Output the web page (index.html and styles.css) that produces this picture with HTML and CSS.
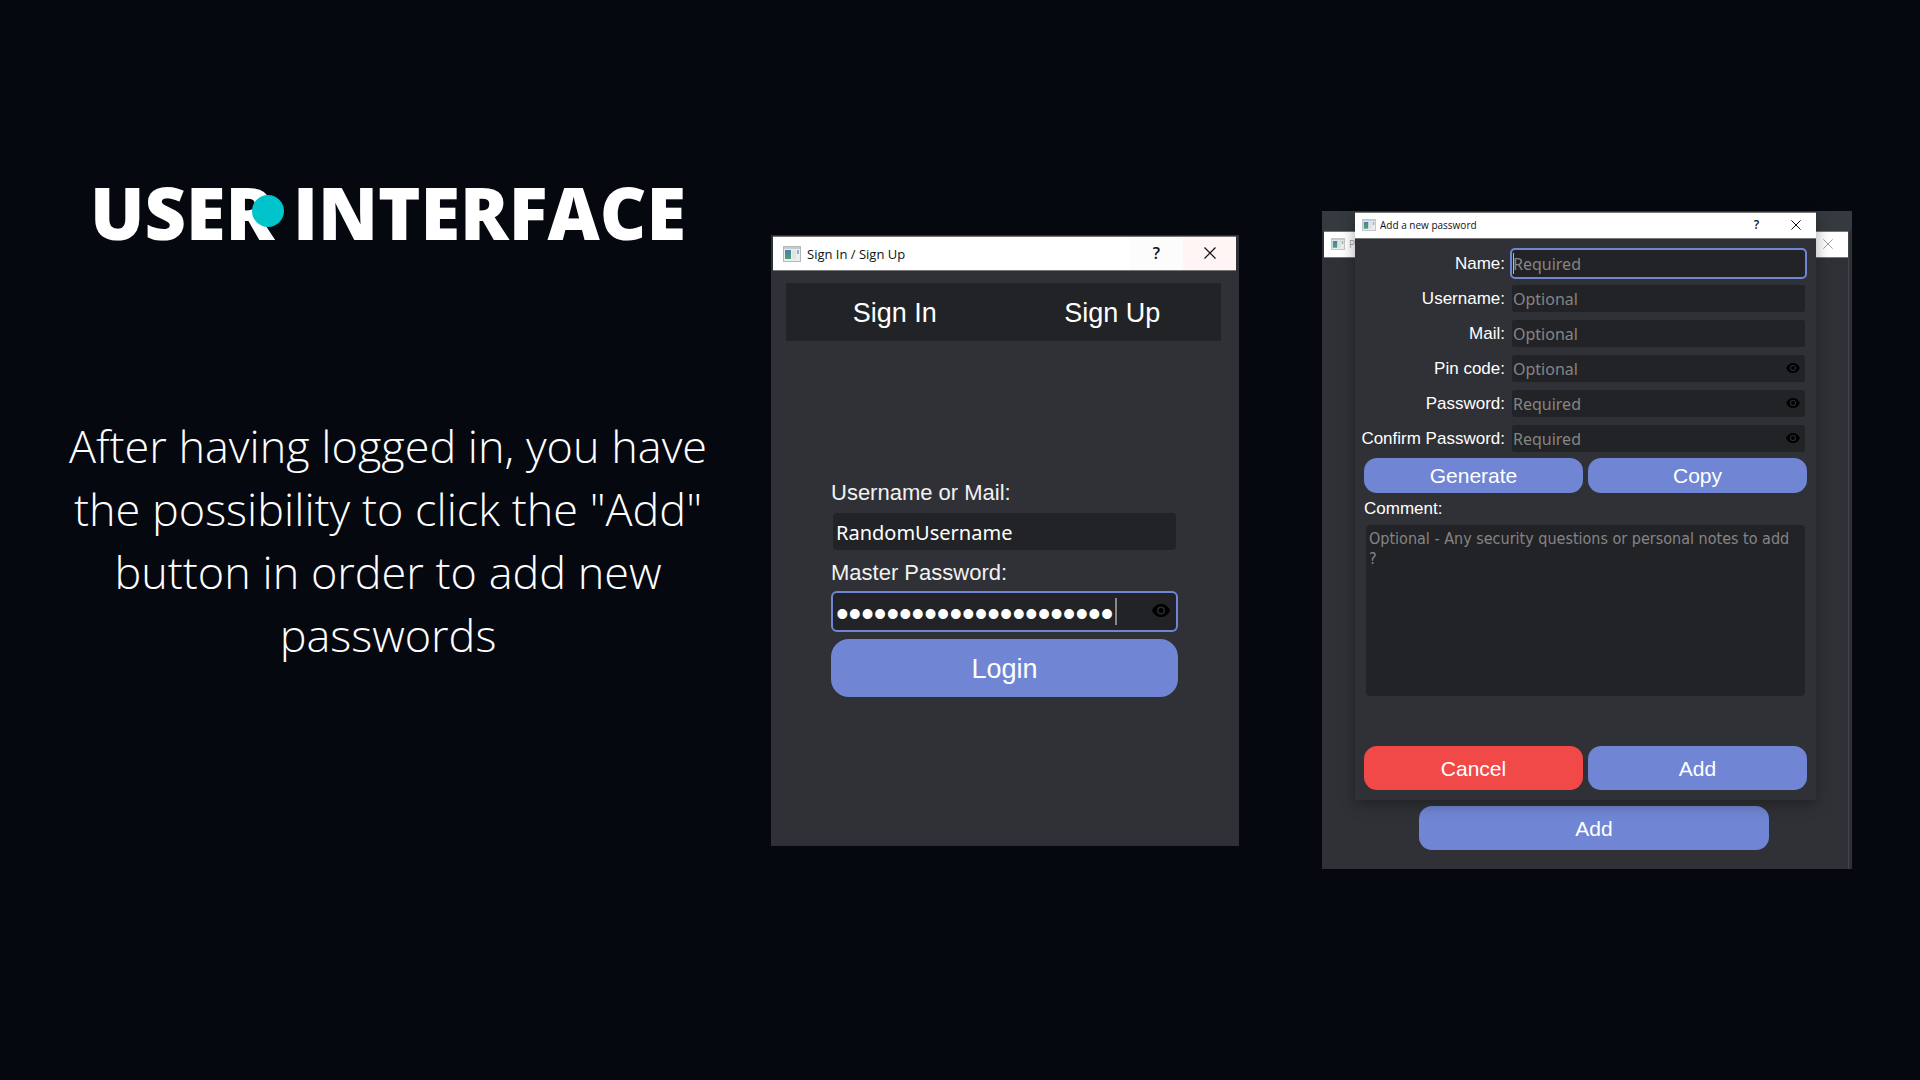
FILE: index.html
```html
<!DOCTYPE html>
<html lang="en">
<head>
<meta charset="utf-8">
<meta name="viewport" content="width=device-width, initial-scale=1">
<title>User Interface</title>
<link rel="stylesheet" href="styles.css">
</head>
<body>
<svg class="defs" width="0" height="0" aria-hidden="true">
  <symbol id="eye" viewBox="0 0 18 13">
    <path d="M9 0C5 0 1.600 2.600 0 6.500 1.600 10.400 5 13 9 13s7.400-2.600 9-6.500C16.400 2.600 13 0 9 0z" fill="#000"/>
    <circle cx="9" cy="6.500" r="3.300" fill="none" stroke="#2b2c30" stroke-width="1.500"/>
  </symbol>
  <symbol id="app" viewBox="0 0 18 16">
    <rect x="0.500" y="0.500" width="17" height="15" fill="#eceeee" stroke="#b4b8bb"/>
    <path d="M1 1h16v2H1z" fill="#c3ccd2"/>
    <linearGradient id="pane" x1="0" y1="0" x2="0" y2="1"><stop offset="0" stop-color="#4c7fa6"/><stop offset="1" stop-color="#4f9f78"/></linearGradient>
    <path d="M2 4h6v9H2z" fill="url(#pane)"/>
    <path d="M9 4h4v9H9z" fill="#dfe3e4"/>
    <path d="M14 4h2v4h-2z" fill="#8fb7c0"/>
  </symbol>
  <symbol id="close" viewBox="0 0 12 12"><path d="M0.500 0.500l11 11M11.500 0.500l-11 11" fill="none" stroke="currentColor" stroke-width="1.200"/></symbol>
</svg>
<main class="slide">
  <section class="intro">
    <h1 class="headline">USER INTERFACE<span class="dot"></span></h1>
    <p class="lead">After having logged in, you have the possibility to click the "Add" button in order to add new passwords</p>
  </section>

  <section class="login-cell">
    <div class="window login">
      <header class="titlebar titlebar-large">
        <svg class="app-icon"><use href="#app"/></svg>
        <span class="title">Sign In / Sign Up</span>
        <button class="win-btn help" type="button">?</button>
        <button class="win-btn shut" type="button" aria-label="Close"><svg class="x"><use href="#close"/></svg></button>
      </header>
      <nav class="tabs">
        <button class="tab" type="button">Sign In</button>
        <button class="tab" type="button">Sign Up</button>
      </nav>
      <form class="login-form">
        <label class="login-label" for="user">Username or Mail:</label>
        <div class="login-field"><input class="login-input" id="user" type="text" value="RandomUsername"></div>
        <label class="login-label" for="master">Master Password:</label>
        <div class="login-field focus">
          <input class="login-input secret" id="master" type="password" value="RandomUserPassword1234">
          <span class="caret caret-large"></span>
          <svg class="eye"><use href="#eye"/></svg>
        </div>
        <button class="btn login-btn" type="button">Login</button>
      </form>
    </div>
  </section>

  <section class="manager-cell">
    <div class="manager">
      <div class="window manager-body">
        <header class="titlebar">
          <svg class="app-icon"><use href="#app"/></svg>
          <span class="title faded">P</span>
          <button class="win-btn faded" type="button" aria-label="Close"><svg class="x"><use href="#close"/></svg></button>
        </header>
        <button class="btn manager-add" type="button">Add</button>
      </div>

      <div class="dialog" role="dialog" aria-labelledby="dialog-title">
        <header class="titlebar">
          <svg class="app-icon"><use href="#app"/></svg>
          <span class="title" id="dialog-title">Add a new password</span>
          <button class="win-btn" type="button">?</button>
          <button class="win-btn" type="button" aria-label="Close"><svg class="x"><use href="#close"/></svg></button>
        </header>
        <form class="entry">
          <div class="row"><label for="name">Name:</label><div class="field focus"><input id="name" type="text" placeholder="Required"><span class="caret"></span></div></div>
          <div class="row"><label for="uname">Username:</label><div class="field"><input id="uname" type="text" placeholder="Optional"></div></div>
          <div class="row"><label for="mail">Mail:</label><div class="field"><input id="mail" type="email" placeholder="Optional"></div></div>
          <div class="row"><label for="pin">Pin code:</label><div class="field"><input id="pin" type="password" placeholder="Optional"><svg class="eye"><use href="#eye"/></svg></div></div>
          <div class="row"><label for="pass">Password:</label><div class="field"><input id="pass" type="password" placeholder="Required"><svg class="eye"><use href="#eye"/></svg></div></div>
          <div class="row"><label for="confirm">Confirm Password:</label><div class="field"><input id="confirm" type="password" placeholder="Required"><svg class="eye"><use href="#eye"/></svg></div></div>
          <div class="pair tools">
            <button class="btn" type="button">Generate</button>
            <button class="btn" type="button">Copy</button>
          </div>
          <label class="comment-label" for="comment">Comment:</label>
          <textarea class="comment" id="comment" placeholder="Optional - Any security questions or personal notes to add ?"></textarea>
          <div class="pair actions">
            <button class="btn danger" type="button">Cancel</button>
            <button class="btn" type="button">Add</button>
          </div>
        </form>
      </div>
    </div>
  </section>
</main>
</body>
</html>
```
FILE: styles.css
```css
* { box-sizing: border-box; }

body {
  margin: 0;
  background: #05080f;
  color: #fff;
  font-family: "Liberation Sans", Arial, sans-serif;
}

.defs { position: absolute; }

button, input, textarea { font: inherit; color: inherit; border: 0; margin: 0; padding: 0; background: none; outline: 0; }

.slide {
  display: grid;
  grid-template-columns: 771fr 551fr 598fr;
  align-items: start;
  min-height: 100vh;
}

/* Intro text */
.intro { padding: 163px 56px 40px 61px; text-align: center; font-family: "Open Sans", sans-serif; }
.headline { position: relative; width: fit-content; margin: 0 auto 133px; font-size: 72px; line-height: 98px; font-weight: 800; white-space: nowrap; }
.dot { position: absolute; left: 162px; top: 32px; width: 32px; height: 32px; border-radius: 50%; background: #00c4cc; }
.lead { margin: 0; padding-top: 20px; font-size: 45px; line-height: 63px; font-weight: 300; }

/* Window chrome */
.window, .dialog { background: #303136; }
.titlebar {
  display: flex;
  align-items: center;
  height: 27px;
  padding: 0 1px 2px 7px;
  background: #fff;
  color: #111;
  border-top: 1px solid #777;
  border-bottom: 1px solid #777;
  font-family: "Open Sans", sans-serif;
  font-size: 10px;
}
.app-icon { width: 14px; height: 12px; margin-right: 4px; }
.title { flex: 1; }
.win-btn { display: flex; align-items: center; justify-content: center; width: 39px; height: 100%; font-size: 12px; font-weight: 600; }
.x { width: 10px; height: 10px; }
.faded { opacity: 0.4; }

.titlebar-large { height: 35px; padding: 0 0 0 10px; font-size: 13px; }
.titlebar-large .app-icon { width: 18px; height: 16px; margin-right: 6px; }
.titlebar-large .win-btn { width: 53px; padding-bottom: 2px; font-size: 16px; }
.titlebar-large .x { width: 12px; height: 12px; }
.titlebar-large .help { background: #fcfcfc; }
.titlebar-large .shut { background: #fff5f5; }

.btn { padding-top: 1px; background: #7086d4; color: #fff; border-radius: 13px; font-size: 21px; }

/* Sign-in window */
.login-cell { padding: 235px 83px 40px 0; }
.login { padding: 0 3px 148px 2px; border: solid #2c2f31; border-width: 1px 0; }
.tabs { display: grid; grid-template-columns: 1fr 1fr; margin: 12px 15px 0 13px; background: #222326; }
.tab { height: 58px; padding-top: 3px; font-size: 27px; }
.login-form { display: flex; flex-direction: column; margin: 139px 58px 0; }
.login-label { font-size: 22px; line-height: 26px; color: #f2f2f2; }
.login-field { position: relative; height: 41px; margin: 5px 0 8px; border: 2px solid transparent; border-radius: 6px; background: #222326 padding-box; }
.login-field.focus { margin-bottom: 7px; border-color: #7086d4; }
.login-input { display: block; width: 100%; height: 100%; padding: 2px 0 0 3px; font-family: "Noto Sans", sans-serif; font-size: 20px; }
.secret { padding-top: 4px; font-family: "Liberation Sans", sans-serif; font-size: 36px; }
.login-btn { height: 58px; padding-top: 3px; border-radius: 18px; font-size: 27px; }

.caret { position: absolute; left: 1px; top: 3px; bottom: 3px; width: 1px; background: #b8b8b8; }
.caret-large { left: 282px; width: 2px; top: 5px; bottom: 5px; background: #888; }
.eye { position: absolute; right: 5px; top: 8px; width: 14px; height: 10px; }
.login-field .eye { right: 6px; top: 11px; width: 18px; height: 13px; }

/* Password manager and its dialog */
.manager-cell { padding: 211px 68px 40px 0; }
.manager { position: relative; padding-top: 20px; background: linear-gradient(#353a3e 20px, #303136 20px); }
.manager-body { display: flex; flex-direction: column; min-height: 638px; margin-right: 3px; margin-left: 2px; border-right: 1px solid #444549; }
.manager-add { width: 350px; height: 44px; margin: auto 79px 19px auto; }
.dialog { position: absolute; left: 33px; right: 36px; top: 1px; box-shadow: 0 4px 14px rgba(0, 0, 0, 0.35); }

.entry { display: flex; flex-direction: column; padding: 9px; font-size: 17px; }
.row { display: grid; grid-template-columns: 141px 1fr; column-gap: 5px; margin-bottom: 4px; line-height: 31px; text-align: right; }
.row label { white-space: nowrap; justify-self: end; }
.field { position: relative; height: 31px; border: 2px solid transparent; border-radius: 5px; background: #222326 padding-box; }
.field.focus { border-color: #7086d4; }
.field input { display: block; width: 100%; height: 100%; padding-left: 1px; font-family: "Noto Sans", sans-serif; font-size: 16px; }
::placeholder { color: #858585; opacity: 1; }

.pair { display: grid; grid-template-columns: 1fr 1fr; gap: 5px; }
.tools .btn { height: 35px; }
.comment-label { margin: 7px 0; line-height: 18px; }
.comment { height: 171px; margin: 0 2px; padding: 4px 10px 4px 3px; border-radius: 4px; background: #222326; font-family: "DejaVu Sans Condensed", "DejaVu Sans", sans-serif; font-size: 16px; line-height: 20px; resize: none; }
.actions { padding: 50px 0 1px; }
.actions .btn { height: 44px; }
.danger { background: #f04947; }
```
